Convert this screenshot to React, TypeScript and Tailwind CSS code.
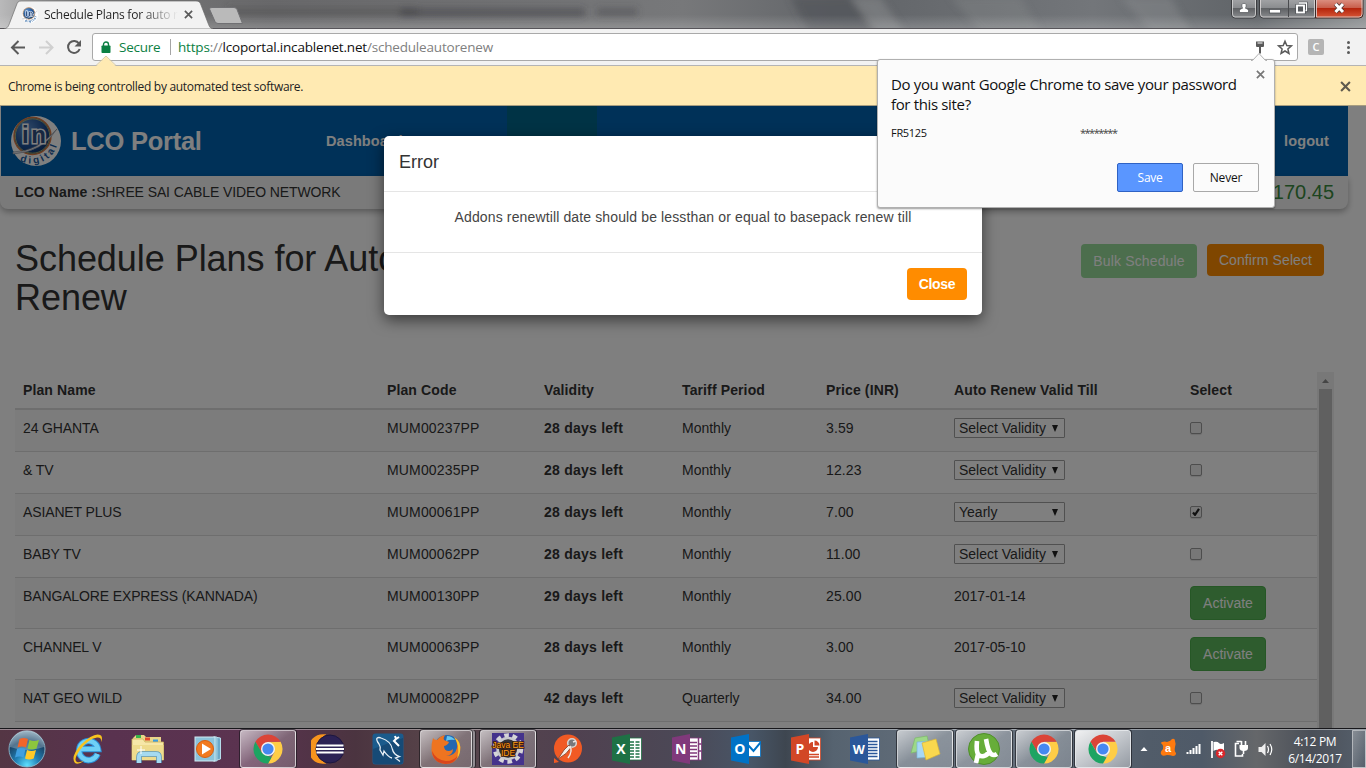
import type { ReactNode } from "react";

const UI = "font-['Open_Sans','Noto_Sans',sans-serif]";

type Plan = {
  name: string;
  code: string;
  left: string;
  period: string;
  price: string;
  choice?: string;
  date?: string;
  checked?: boolean;
};

const plans: Plan[] = [
  { name: "24 GHANTA", code: "MUM00237PP", left: "28 days left", period: "Monthly", price: "3.59", choice: "Select Validity" },
  { name: "& TV", code: "MUM00235PP", left: "28 days left", period: "Monthly", price: "12.23", choice: "Select Validity" },
  { name: "ASIANET PLUS", code: "MUM00061PP", left: "28 days left", period: "Monthly", price: "7.00", choice: "Yearly", checked: true },
  { name: "BABY TV", code: "MUM00062PP", left: "28 days left", period: "Monthly", price: "11.00", choice: "Select Validity" },
  { name: "BANGALORE EXPRESS (KANNADA)", code: "MUM00130PP", left: "29 days left", period: "Monthly", price: "25.00", date: "2017-01-14" },
  { name: "CHANNEL V", code: "MUM00063PP", left: "28 days left", period: "Monthly", price: "3.00", date: "2017-05-10" },
  { name: "NAT GEO WILD", code: "MUM00082PP", left: "42 days left", period: "Quarterly", price: "34.00", choice: "Select Validity" },
];

const COLS = "grid grid-cols-[364px_157px_138px_144px_128px_236px_135px]";

function Logo({ className }: { className: string }) {
  return (
    <svg viewBox="0 0 50 50" className={`${className} overflow-visible`}>
      <defs>
        <radialGradient id="orbBlue" cx="0.35" cy="0.3" r="0.8">
          <stop offset="0" stopColor="#5b8fce" />
          <stop offset="0.6" stopColor="#1d4f96" />
          <stop offset="1" stopColor="#0d3266" />
        </radialGradient>
        <path id="ring" d="M9 45 C22 51 45 48 48.500 20" />
      </defs>
      <circle cx="25" cy="25" r="25" fill="#fff" />
      <circle cx="21.500" cy="20" r="18.500" fill="url(#orbBlue)" stroke="#dd7a42" strokeWidth="1.400" />
      <circle cx="21.500" cy="20" r="17.200" fill="none" stroke="#c9c86a" strokeWidth="0.800" />
      <path d="M2 36 Q26 36 46 13 Q32 36 2 38Z" fill="#e8e8ee" stroke="#7b8696" strokeWidth="0.600" />
      <text x="11" y="27" fontSize="24" fontWeight="700" fontFamily="Liberation Sans" fill="#2f4f80" stroke="#fff" strokeWidth="3" paintOrder="stroke" textLength="24">in</text>
      <text fontSize="10" fontWeight="700" fontFamily="Liberation Sans" fill="#1b5a9e" letterSpacing="2.600">
        <textPath href="#ring">digital</textPath>
      </text>
    </svg>
  );
}

function Cross({ className }: { className: string }) {
  return (
    <svg viewBox="0 0 10 10" className={className} fill="none" stroke="currentColor">
      <path d="M1 1l8 8M9 1l-8 8" strokeWidth="1.900" />
    </svg>
  );
}

function TitleBar() {
  return (
    <div className="relative h-[29px] w-full shrink-0 overflow-hidden bg-[#6e6f72]">
      <svg className="absolute inset-0" width="1366" height="29" viewBox="0 0 1366 29">
        <defs>
          <linearGradient id="glass" x1="0" x2="1" y1="0" y2="0">
            <stop offset="0" stopColor="#b9b9ba" />
            <stop offset="0.06" stopColor="#777" />
            <stop offset="0.2" stopColor="#6a6a6c" />
            <stop offset="0.5" stopColor="#77787a" />
            <stop offset="0.62" stopColor="#616468" />
            <stop offset="0.8" stopColor="#73767a" />
            <stop offset="0.92" stopColor="#606468" />
            <stop offset="1" stopColor="#8d9092" />
          </linearGradient>
          <linearGradient id="glow" x1="0" x2="0" y1="0" y2="1">
            <stop offset="0.500" stopColor="#fff" stopOpacity="0" />
            <stop offset="1" stopColor="#fff" stopOpacity="0.2" />
          </linearGradient>
          <filter id="soft" x="-20%" y="-80%" width="140%" height="260%">
            <feGaussianBlur stdDeviation="3.500" />
          </filter>
          <linearGradient id="closeRed" x1="0" x2="0" y1="0" y2="1">
            <stop offset="0" stopColor="#dd9384" />
            <stop offset="0.45" stopColor="#c9604d" />
            <stop offset="0.5" stopColor="#b5250c" />
            <stop offset="1" stopColor="#d8593a" />
          </linearGradient>
          <linearGradient id="ctl" x1="0" x2="0" y1="0" y2="1">
            <stop offset="0" stopColor="#a3a4a6" />
            <stop offset="0.45" stopColor="#8b8d90" />
            <stop offset="0.5" stopColor="#606265" />
            <stop offset="1" stopColor="#8a8c8f" />
          </linearGradient>
        </defs>
        <rect width="1366" height="29" fill="url(#glass)" />
        <g filter="url(#soft)">
          <rect x="228" y="7" width="190" height="9" fill="#48484a" opacity="0.400" />
          <rect x="400" y="8" width="185" height="9" fill="#3c3c3e" opacity="0.450" />
          <rect x="597" y="8" width="40" height="8" fill="#48484a" opacity="0.450" />
          <path d="M790 -3h60l30 36h-70z" fill="#525659" opacity="0.700" />
          <path d="M850 -3h30l25 36h-30z" fill="#8c8e90" opacity="0.500" />
          <path d="M950 -3h70l22 36h-60z" fill="#8c8e90" opacity="0.300" />
          <path d="M1120 -3h50l22 36h-40z" fill="#8c8e90" opacity="0.400" />
        </g>
        <rect width="1366" height="29" fill="url(#glow)" />
        <path d="M0 28.500H1366" stroke="#57555a" />
        <path d="M4 29 C8 28 8.500 26 10 22 L16.500 5 C17.500 2 18.500 1 21 1 H196 C199 1 200 2 201 5 L208 23 C209.500 27 210 28 213 29Z" fill="#f2f2f2" stroke="#6b6b6b" strokeWidth="0.700" />
        <path d="M212 7.500 H234 Q236 7.500 237 9.500 L242.500 23.500 H218 Q216 23.500 215 21.500 L209.500 9 Q209 7.500 212 7.500Z" fill="#bababa" stroke="#707073" />
        <path d="M1231.500 -1V14Q1231.500 18 1235 18H1253Q1256.500 18 1256.500 14V-1Z" fill="url(#ctl)" stroke="#3c3d40" />
        <path d="M1232.500 -1V14Q1232.500 17 1235 17H1253Q1255.500 17 1255.500 14V-1" fill="none" stroke="#d8d8d8" strokeWidth="0.800" />
        <path d="M1259.500 -1V14Q1259.500 18 1263 18H1315.500V-1Z" fill="url(#ctl)" stroke="#3c3d40" />
        <path d="M1315.500 -1V18H1359Q1363 18 1363 14V-1Z" fill="url(#closeRed)" stroke="#3c2a28" />
        <path d="M1260.500 -1V14Q1260.500 17 1263 17H1314.500V-1M1316.500 -1V17H1359Q1362 17 1362 14V-1" fill="none" stroke="#e0dcdc" strokeWidth="0.800" />
        <path d="M1288.500 0V17" stroke="#4a4b4e" />
        <path d="M1239.500 12.500V10.500Q1240 8.500 1242.500 8.300Q1240.500 3.500 1244 3.300Q1247.500 3.500 1245.500 8.300Q1248 8.500 1248.500 10.500V12.500Z" fill="#fff" stroke="#515459" strokeWidth="0.700" />
        <rect x="1269.500" y="9.500" width="11" height="3.500" fill="#fff" stroke="#515459" strokeWidth="0.800" />
        <path d="M1299 3h7.500v7.500h-2" fill="none" stroke="#45484d" strokeWidth="2.600" />
        <path d="M1299 3h7.500v7.500h-2" fill="none" stroke="#fff" strokeWidth="1.300" />
        <rect x="1297" y="5.500" width="7" height="7" fill="#55585c" stroke="#45484d" strokeWidth="3" />
        <rect x="1297" y="5.500" width="7" height="7" fill="#55585c" stroke="#fff" strokeWidth="1.900" />
        <path d="M1335.500 4l7.500 8M1343 4l-7.500 8" stroke="#4c3230" strokeWidth="4.500" />
        <path d="M1335.500 4l7.500 8M1343 4l-7.500 8" stroke="#fff" strokeWidth="3" />
      </svg>
      <div className="relative flex h-[29px] w-[212px] items-center pl-[22px]">
        <Logo className="h-4 w-4" />
        <div className={`${UI} ml-[6px] w-[134px] overflow-hidden bg-linear-to-r from-[#222] from-[72%] to-transparent bg-clip-text text-[12px] leading-4 tracking-[-0.25px] whitespace-nowrap text-transparent`}>
          Schedule Plans for auto r
        </div>
        <Cross className="ml-[6px] h-[9px] w-[9px] text-[#5a5a5a]" />
      </div>
    </div>
  );
}

function Toolbar() {
  return (
    <div className="flex h-[37px] w-full shrink-0 items-start border-b border-[#b4b4b4] bg-[#f2f2f2] pt-1">
      <svg width="92" height="28" viewBox="0 0 92 28" fill="none" className="shrink-0" strokeWidth="2">
        <path d="M25 14.500H12.500M18.500 8l-6.500 6.500 6.500 6.500" stroke="#5a5a5a" />
        <path d="M39 14.500H52M46 8l6.500 6.500-6.500 6.500" stroke="#d0d0d0" />
        <path d="M79 10.500A6 6 0 1 0 79.700 16" stroke="#5a5a5a" />
        <path d="M81 7v6.500h-6.500z" fill="#5a5a5a" />
      </svg>
      <div className={`${UI} flex h-7 w-[1206px] shrink-0 items-center rounded-[3px] border border-[#a9a9a9] bg-white pl-2 text-[14px] tracking-[-0.25px]`}>
        <svg width="10" height="13" viewBox="0 0 10 13" className="shrink-0">
          <path d="M2.500 5V3.500a2.500 2.500 0 0 1 5 0V5" fill="none" stroke="#0b8043" strokeWidth="1.400" />
          <rect x="0.500" y="4.500" width="9" height="7.500" rx="0.800" fill="#0b8043" />
        </svg>
        <span className="ml-[8px] w-[51px] shrink-0 text-[13.5px] text-[#0b8043]">Secure</span>
        <span className="mr-[7px] h-4 w-px shrink-0 bg-[#a5a5a5]" />
        <span className="w-[1066px] shrink-0 text-[13.5px] tracking-[-0.19px] text-[#808080]">
          <span className="text-[#0b8043]">https</span>://<span className="text-[#111]">lcoportal.incablenet.net</span>/scheduleautorenew
        </span>
        <svg width="50" height="26" viewBox="0 0 50 26" className="shrink-0">
          <path d="M12 7.500h8v4.500q0 1-1 1h-2v6.500h-2v-6.500h-2q-1 0-1-1z" fill="#5a5a5a" />
          <path d="M13.500 9h5" stroke="#fff" strokeWidth="1" />
          <path d="M41 7.200l1.800 4.300 4.600.4-3.500 3 1.050 4.500-3.950-2.400-3.950 2.400 1.050-4.500-3.500-3 4.600-.4z" fill="none" stroke="#5a5a5a" strokeWidth="1.500" />
        </svg>
      </div>
      <div className="mt-[6px] ml-[10px] flex h-4 w-4 items-center justify-center rounded-[2px] bg-[#b5b5b5] font-['Open_Sans',sans-serif] text-[11px] font-semibold text-white">C</div>
      <div className="mt-[8px] ml-[23px] flex w-[3px] flex-col gap-[2px]">
        <i className="h-[3px] rounded-full bg-[#5a5a5a]" />
        <i className="h-[3px] rounded-full bg-[#5a5a5a]" />
        <i className="h-[3px] rounded-full bg-[#5a5a5a]" />
      </div>
    </div>
  );
}

function InfoBar() {
  return (
    <div className={`${UI} relative flex h-[40px] w-full shrink-0 items-center justify-between border-b border-[#a79d80] bg-[#ffeab2] pt-[2px] pr-[15px] pl-2 text-[12px] text-[#222]`}>
      <svg className="absolute -top-[10px] left-[96px]" width="20" height="11" viewBox="0 0 20 11">
        <path d="M0 10.500L10 0.500L20 10.500V11H0Z" fill="#ffeab2" />
        <path d="M0 9.500L10 0L20 9.500" fill="none" stroke="#d9cca5" />
      </svg>
      <span className="tracking-[-0.3px]">Chrome is being controlled by automated test software.</span>
      <Cross className="h-[11px] w-[11px] text-[#5f5a4e]" />
    </div>
  );
}

function Row({ plan, index }: { plan: Plan; index: number }) {
  const cell = "px-2 pt-2 leading-5 whitespace-nowrap";
  return (
    <div className={`${COLS} border-b border-[#ddd] ${plan.date ? "h-[51px]" : "h-[42px]"} ${index % 2 === 0 ? "bg-[#f9f9f9]" : "bg-white"}`}>
      <div className={`${cell} tracking-[-0.13px]`}>{plan.name}</div>
      <div className={`${cell} tracking-[0.15px]`}>{plan.code}</div>
      <div className={`${cell} font-bold tracking-[0.24px]`}>{plan.left}</div>
      <div className={cell}>{plan.period}</div>
      <div className={`${cell} tracking-[0.1px]`}>{plan.price}</div>
      <div className={cell}>
        {plan.date ? (
          plan.date
        ) : (
          <div className="flex h-5 w-[111px] items-center justify-between rounded-[1px] border border-[#a0a0a0] bg-white pr-[5px] pl-1">
            <span>{plan.choice}</span>
            <svg width="8" height="7" viewBox="0 0 8 7"><path d="M1 0h6L4 7z" fill="#222" /></svg>
          </div>
        )}
      </div>
      <div className={cell}>
        {plan.date ? (
          <div className="flex h-[34px] w-[76px] items-center justify-center rounded border border-[#4cae4c] bg-[#5cb85c] text-white">Activate</div>
        ) : (
          <div className="mt-1 flex h-3 w-3 items-center justify-center rounded-[2px] border border-[#9a9a9a] bg-[#eee] shadow-[0_1px_1px_rgba(0,0,0,0.12)]">
            {plan.checked && (
              <svg width="8" height="8" viewBox="0 0 8 8"><path d="M1 4.500l2 2.300L7 0.800" fill="none" stroke="#222" strokeWidth="2.200" /></svg>
            )}
          </div>
        )}
      </div>
    </div>
  );
}

function Portal() {
  return (
    <div className="flex h-full w-[1348px] flex-col">
      <div className="ml-px flex h-[70px] shrink-0 items-center bg-[#0063b1] font-bold text-white">
        <Logo className="ml-[10px] h-[50px] w-[50px] shrink-0" />
        <div className="ml-[10px] w-[255px] text-[25.5px] tracking-[-0.25px]">LCO Portal</div>
        <div className="w-[181px] pt-px text-[14.5px] tracking-[0.1px]">Dashboard</div>
        <div className="h-full w-[90px] bg-[#00668a]" />
        <div className="mr-[19px] ml-auto pt-px text-[14.5px] tracking-[0.1px]">logout</div>
      </div>
      <div className="flex h-[33px] shrink-0 items-center justify-between rounded-b-[8px] bg-[#f5f5f5] pr-[14px] pl-[15px] shadow-[0_3px_6px_rgba(0,0,0,0.3)]">
        <div className="text-[14px] tracking-[-0.1px]"><b className="tracking-[0.1px]">LCO Name :</b>SHREE SAI CABLE VIDEO NETWORK</div>
        <div className="pb-px text-[20px] text-[#3a8a40]">170.45</div>
      </div>
      <div className="flex h-[163px] shrink-0 justify-between pt-[30px] pr-6 pl-[15px]">
        <h1 className="w-[400px] text-[36px] leading-[39px] tracking-[-0.05px]">Schedule Plans for Auto Renew</h1>
        <div className="flex items-start gap-[10px] pt-[5px] text-[14px] text-white">
          <div className="flex h-[34px] w-[116px] items-center justify-center rounded bg-[#98dc9a] tracking-[0.15px]">Bulk Schedule</div>
          <div className="flex h-8 w-[117px] items-center justify-center rounded bg-[#ff8c00] tracking-[0.1px]">Confirm Select</div>
        </div>
      </div>
      <div className="flex min-h-0 flex-1 overflow-hidden pl-[15px] text-[14px]">
        <div className="w-[1302px]">
          <div className={`${COLS} h-[38px] border-b-2 border-[#ddd] font-bold tracking-[0.12px]`}>
            {["Plan Name", "Plan Code", "Validity", "Tariff Period", "Price (INR)", "Auto Renew Valid Till", "Select"].map((h) => (
              <div key={h} className="px-2 pt-2 leading-5">{h}</div>
            ))}
          </div>
          {plans.map((p, i) => <Row key={p.code} plan={p} index={i} />)}
          <div className="h-10 bg-white" />
        </div>
        <div className="flex w-[17px] flex-col items-center bg-[#f1f1f1]">
          <div className="flex h-[17px] items-center pt-px"><svg width="7" height="4" viewBox="0 0 7 4"><path d="M0 4h7L3.500 0z" fill="#8a8a8a" /></svg></div>
          <div className="w-[13px] flex-1 bg-[#c1c1c1]" />
        </div>
      </div>
    </div>
  );
}

function ErrorDialog() {
  return (
    <div className="absolute top-[30px] left-[384px] flex h-[179px] w-[598px] flex-col rounded-[5px] bg-white shadow-[0_5px_15px_rgba(0,0,0,0.55)]">
      <div className="flex h-14 items-center border-b border-[#e5e5e5] px-[15px] pb-[2px] text-[18px]">Error</div>
      <div className="flex h-[61px] justify-center border-b border-[#e5e5e5] pt-[15px] text-[14px] leading-5 tracking-[0.13px] text-[#444]">
        Addons renewtill date should be lessthan or equal to basepack renew till
      </div>
      <div className="flex flex-1 justify-end pt-[15px] pr-[15px]">
        <div className="flex h-8 w-[60px] items-center justify-center rounded bg-[#ff8c00] text-[14px] font-bold tracking-[-0.3px] text-white">Close</div>
      </div>
    </div>
  );
}

function PasswordBubble() {
  return (
    <div className={`${UI} absolute top-[59px] left-[877px] h-[149px] w-[398px] rounded-[3px] border border-[#b0b0b0] bg-[#fbfbfb] pt-[14px] pr-[15px] pl-[13px] text-[#111] shadow-[0_1px_2px_rgba(0,0,0,0.4)]`}>
      <svg className="absolute -top-[8px] left-[373px]" width="16" height="9" viewBox="0 0 16 9">
        <path d="M0 8.500h1.500L8 1.500l6.500 7H16" fill="#fbfbfb" stroke="#b0b0b0" />
        <path d="M2 9h12" stroke="#fbfbfb" />
      </svg>
      <Cross className="absolute top-[10px] right-[9px] h-[9px] w-[9px] text-[#777]" />
      <div className="text-[15px] leading-5 tracking-[-0.35px]">Do you want Google Chrome to save your password<br />for this site?</div>
      <div className="flex pt-[11px] text-[11px] leading-4">
        <span className="w-[189px] tracking-[-0.3px]">FR5125</span>
        <span className="tracking-[-1.5px] text-[#444]">********</span>
      </div>
      <div className="flex justify-end gap-[10px] pt-[22px] text-[12px]">
        <div className="flex h-[29px] w-[66px] items-center justify-center rounded-[2px] border border-[#2f62c4] bg-[#5a96ff] tracking-[-0.3px] text-white">Save</div>
        <div className="flex h-[29px] w-[66px] items-center justify-center rounded-[2px] border border-[#a8a8a8] bg-[#fbfbfb] tracking-[-0.2px]">Never</div>
      </div>
    </div>
  );
}

function ChromeIcon() {
  return (
    <svg width="30" height="30" viewBox="0 0 30 30">
      <path d="M27.600 7.700A14.600 14.600 0 0 1 15 29.600L21.500 18 15 8.300Z" fill="#ffcd46" />
      <path d="M2.400 7.700L8.700 18.600L15 15L15 7.700L27.600 7.700A14.600 14.600 0 0 0 2.400 7.700Z" fill="#db4437" />
      <path d="M2.400 7.700L9 19l6 3 3.500 1.500L15 29.600A14.600 14.600 0 0 1 2.400 7.700Z" fill="#1da462" />
      <circle cx="15" cy="15" r="7" fill="#f4f4f4" />
      <circle cx="15" cy="15" r="5.600" fill="#4688f1" />
    </svg>
  );
}

function OfficeIcon({ letter, color, kind }: { letter: string; color: string; kind: string }) {
  return (
    <svg width="30" height="30" viewBox="0 0 30 30">
      {kind !== "mail" && <rect x="15" y="4" width="14.500" height="22" fill="#fff" stroke={color} strokeWidth="0.800" />}
      {kind === "grid" && <path d="M18 8h4M23.500 8h4M18 11h4M23.500 11h4M18 14h4M23.500 14h4M18 17h4M23.500 17h4M18 20h4M23.500 20h4M18 23h4M23.500 23h4" stroke={color} strokeWidth="1.700" />}
      {kind === "lines" && <path d="M18 7.500h9.500M18 10.500h9.500M18 13.500h9.500M18 16.500h9.500M18 19.500h9.500M18 22.500h9.500" stroke={color} strokeWidth="1.500" />}
      {kind === "note" && <path d="M18 8.500h7M18 12h7M18 15.500h7M18 19h7M18 22.500h7M26.500 4v22M26.500 10h3M26.500 17h3" stroke={color} strokeWidth="1.500" />}
      {kind === "mail" && (
        <>
          <rect x="15" y="7.500" width="14.500" height="15" fill="#fff" stroke={color} strokeWidth="0.800" />
          <path d="M17 11l5.500 6L30 8" fill="none" stroke={color} strokeWidth="2" />
        </>
      )}
      {kind === "pie" && (
        <>
          <path d="M22 8v5h5a5 5 0 1 1-5-5z" fill={color} />
          <path d="M23.500 6.500a5 5 0 0 1 5 5h-5z" fill={color} />
          <path d="M18 20.500h10M18 23h10" stroke={color} strokeWidth="1.300" />
        </>
      )}
      <path d="M0 3.500L18 0v30L0 26.500z" fill={color} />
      <text x="8.800" y="20" textAnchor="middle" fontSize={letter === "W" ? 12.5 : 14} fontWeight="700" fontFamily="Open Sans" fill="#fff">{letter}</text>
    </svg>
  );
}

function StartOrb() {
  return (
    <svg width="40" height="38" viewBox="0 0 40 38" className="ml-[7px] shrink-0">
      <defs>
        <radialGradient id="start" cx="0.5" cy="0.95" r="0.95">
          <stop offset="0" stopColor="#5fe0ff" />
          <stop offset="0.35" stopColor="#2180b5" />
          <stop offset="0.7" stopColor="#1a4568" />
          <stop offset="1" stopColor="#7f9fb3" />
        </radialGradient>
      </defs>
      <circle cx="20" cy="19" r="18" fill="url(#start)" stroke="#8fb9cc" strokeWidth="0.900" />
      <path d="M3 17A17 17 0 0 1 37 17Q20 23 3 17Z" fill="#fff" opacity="0.250" />
      <path d="M12.500 9q4-2 8.500 0l-2 8.500q-4-2-8.500 0z" fill="#f1652a" />
      <path d="M22.500 10q4.500 2 9.500 0l-2.500 8.500q-4.500 2-9 0z" fill="#8cc63e" />
      <path d="M10 19q4-2 8.500 0l-2 8.500q-4-2-8.500 0z" fill="#3f9fe0" />
      <path d="M20 20q4.500 2 9 0l-2.300 8.500q-4.500 2-8.700 0z" fill="#ffc928" />
    </svg>
  );
}

const ieIcon = (
  <svg width="34" height="34" viewBox="0 0 34 34">
    <path d="M26.500 22A9.500 9.500 0 1 1 27 17H10" fill="none" stroke="#2b8fd6" strokeWidth="6.500" />
    <path d="M26.500 22A9.500 9.500 0 1 1 27 17H10" fill="none" stroke="#6fd0f6" strokeWidth="4.500" />
    <path d="M4 31Q-1 25 10 12.500Q24 -1 30 3.500Q32 5.500 30 10.500Q31 5 26 5.500Q17 7 9 18Q2 28 6 30Q9 31 13 28.500Q7 33.500 4 31Z" fill="#f7c31f" />
  </svg>
);

const folderIcon = (
  <svg width="34" height="32" viewBox="0 0 34 32">
    <path d="M2 5l3-3h8l2 2h15v5H2z" fill="#e9d489" />
    <rect x="5" y="2" width="5" height="3" fill="#36b54a" /><rect x="14" y="4.500" width="5" height="3" fill="#e2492c" /><rect x="22" y="6.500" width="5" height="3" fill="#3a9de0" />
    <path d="M1 6h11l2 3h18.500v18H1z" fill="#f6e7a8" stroke="#cdb25c" strokeWidth="0.800" />
    <path d="M1 12h31.500v15H1z" fill="#eedb8d" />
    <path d="M8 30v-6q0-3 3-3h14q3 0 3 3v6" fill="none" stroke="#5797bd" strokeWidth="5.500" />
    <path d="M8 30v-6q0-3 3-3h14q3 0 3 3v6" fill="none" stroke="#a5daf0" strokeWidth="4" />
    <path d="M10 13v8M6 17h8" stroke="#fff" strokeWidth="1" />
  </svg>
);

const mediaIcon = (
  <svg width="28" height="26" viewBox="0 0 28 26">
    <path d="M20 1l6.500 1v21L20 25z" fill="#6ca9c9" stroke="#b6dcea" />
    <path d="M19 1h4v24h-4z" fill="#7db8d3" stroke="#bfe2ee" strokeWidth="0.700" />
    <rect x="1" y="1" width="20" height="24" fill="#8cc3da" stroke="#d2eaf2" />
    <circle cx="11" cy="13" r="8.500" fill="#f27a1f" stroke="#d85f10" />
    <path d="M8 7.500v11l9-5.500z" fill="#fff" />
  </svg>
);

const eclipseIcon = (
  <svg width="34" height="30" viewBox="0 0 34 30">
    <path d="M12 1.500A13.500 13.500 0 0 0 12 28.500A18 18 0 0 1 12 1.500Z" fill="#f7941e" stroke="#f7941e" strokeWidth="2.500" />
    <circle cx="19" cy="15" r="14" fill="#2c2255" stroke="#1d1740" />
    <path d="M5.500 11.500h27M5 15h28M5.500 18.500h27" stroke="#fff" strokeWidth="2" />
  </svg>
);

const mysqlIcon = (
  <svg width="32" height="32" viewBox="0 0 32 32">
    <rect x="0.500" y="0.500" width="31" height="31" rx="3" fill="#1b5b8c" />
    <path d="M1 16L31 5v23q0 3-3 3H4q-3 0-3-3z" fill="#164a76" />
    <path d="M5 5q2-1 4 0q10 3 11.500 11.500q1 5 7 7l-4 1.500 4.500 3.500M5 5q-1 2 2 6q2 3 1 6l3 5 1-4q4 6 8 7" fill="none" stroke="#e8eff5" strokeWidth="1.300" />
    <path d="M23 3l1 3-2 2 5 5M24 6l3-2" stroke="#fff" strokeWidth="2" fill="none" />
  </svg>
);

const firefoxIcon = (
  <svg width="32" height="32" viewBox="0 0 32 32">
    <circle cx="17" cy="15" r="13" fill="#2467b0" />
    <path d="M17 3a11 11 0 0 1 8 4q-5-1-9 1z" fill="#63c6f1" />
    <path d="M3 5q1 2 4 2q3-4 8-5q-2 3-1 5l5 2q-1 3-5 4q0 5 5 5q2 0 4-2q0 6-7 7q9 0 11-8q1-6-3-11q8 5 6 15Q27 31 15.500 31Q3 30 1.500 18Q1 11 3 5Z" fill="#ee7420" />
    <path d="M24 4q8 5 6 15q-1 4-3 6q2-6 1-12q-1-5-4-9z" fill="#fbc52b" />
    <path d="M2 18q4 9 14 10q8 0 12-6-3 9-12.500 9Q3 30 2 18z" fill="#d9461c" />
  </svg>
);

const javaIcon = (
  <svg width="36" height="32" viewBox="0 0 36 32" className="overflow-visible">
    <rect x="2" y="0" width="32" height="32" fill="#45338c" />
    <circle cx="18" cy="15.500" r="12.800" fill="none" stroke="#d5d5d8" strokeWidth="5" strokeDasharray="4.500 3.540" />
    <circle cx="18" cy="15.500" r="10.500" fill="#33333a" stroke="#c9c9ce" strokeWidth="2.500" />
    <g fontFamily="Liberation Sans" fontSize="8.500" textAnchor="middle" fill="#ff9e1b" stroke="#3a1a08" strokeWidth="1.600" paintOrder="stroke">
      <text x="18" y="14.500">Java EE</text>
      <text x="18" y="22.800">IDE</text>
    </g>
  </svg>
);

const postmanIcon = (
  <svg width="30" height="30" viewBox="0 0 30 30">
    <path d="M1 29v-5l5 4z" fill="#f15a24" />
    <circle cx="15" cy="14.500" r="14" fill="#f15a24" />
    <circle cx="19" cy="9" r="4.300" fill="#77787b" stroke="#d9d4d0" strokeWidth="1.600" />
    <path d="M16 11l-5 5-6 9 8-5.500 5-6z" fill="#f4efe9" stroke="#8d4930" strokeWidth="0.900" />
    <path d="M17 12q3 5-2 12M20 8l3-1" stroke="#ede7e3" strokeWidth="1.500" fill="none" />
  </svg>
);

const notesIcon = (
  <svg width="32" height="28" viewBox="0 0 32 28">
    <path d="M6 3l12-2 3 13-19 4z" fill="#9dd888" stroke="#7dba68" strokeWidth="0.700" />
    <path d="M8 7l14-1v16l-14 1z" fill="#a6d7f6" stroke="#7ab4d7" strokeWidth="0.700" />
    <path d="M13 8l14-4 4 15-14 6z" fill="#fad84e" stroke="#d8b437" strokeWidth="0.700" />
  </svg>
);

const torrentIcon = (
  <svg width="34" height="34" viewBox="0 0 34 34">
    <circle cx="17" cy="17" r="15.500" fill="#67ad3a" stroke="#4f8f2a" />
    <path d="M10 9q-1 10 1 13q2 3 6 2q4-1 4-4M19 7q2 12 5 15q3 2 6 0M11 22l-2 9" stroke="#fff" strokeWidth="4.600" fill="none" />
  </svg>
);

type Task = { id: string; icon: ReactNode; state?: "open" | "stack" | "active"; wide?: boolean };

const tasks: Task[] = [
  { id: "ie", icon: ieIcon, wide: true },
  { id: "explorer", icon: folderIcon, wide: true },
  { id: "media", icon: mediaIcon, wide: true },
  { id: "chrome", icon: <ChromeIcon />, state: "open", wide: true },
  { id: "eclipse", icon: eclipseIcon, wide: true },
  { id: "mysql", icon: mysqlIcon, wide: true },
  { id: "firefox", icon: firefoxIcon, state: "stack", wide: true },
  { id: "java", icon: javaIcon, state: "open", wide: true },
  { id: "postman", icon: postmanIcon },
  { id: "excel", icon: <OfficeIcon letter="X" color="#1e7145" kind="grid" /> },
  { id: "onenote", icon: <OfficeIcon letter="N" color="#80397b" kind="note" /> },
  { id: "outlook", icon: <OfficeIcon letter="O" color="#0072c6" kind="mail" /> },
  { id: "powerpoint", icon: <OfficeIcon letter="P" color="#d24726" kind="pie" /> },
  { id: "word", icon: <OfficeIcon letter="W" color="#2b579a" kind="lines" /> },
  { id: "notes", icon: notesIcon, state: "open" },
  { id: "torrent", icon: torrentIcon, state: "open" },
  { id: "chrome2", icon: <ChromeIcon />, state: "open" },
  { id: "chrome3", icon: <ChromeIcon />, state: "active" },
];

function taskClass(state?: string) {
  const frame = "flex h-[38px] items-center justify-center";
  if (state === "active") return `${frame} w-[56px] rounded-[3px] border border-[#e2e5e8] bg-linear-to-br from-[#f0f1f2] via-[#c3c7cc] to-[#959ba3] shadow-[0_0_0_1px_rgba(20,20,25,0.6)]`;
  if (state === "open") return `${frame} w-[56px] rounded-[3px] border border-white/60 bg-linear-to-br from-white/65 via-white/25 to-white/20 shadow-[0_0_0_1px_rgba(20,20,25,0.6)]`;
  if (state === "stack") return `${frame} mr-[4px] w-[52px] rounded-[3px] border border-white/60 bg-linear-to-br from-white/65 via-white/25 to-white/20 shadow-[0_0_0_1px_rgba(20,20,25,0.6),3px_0_0_0_rgba(190,185,190,0.7),4px_0_0_0_rgba(20,20,25,0.6)]`;
  return frame;
}

function Taskbar() {
  return (
    <div className="flex h-10 w-full shrink-0 items-center border-t border-[#17171b] bg-[linear-gradient(90deg,#543644_0%,#59324f_8%,#5b3350_18%,#4b3440_26%,#58454a_32%,#504150_42%,#4b4856_50%,#485667_55%,#3e4650_57.5%,#566370_61%,#69737f_72%,#515c69_84%,#4f5a68_88%,#65676a_92%,#4a4f58_96%,#56606c_100%)] shadow-[inset_0_1px_0_rgba(255,255,255,0.4)]">
      <StartOrb />
      <div className="ml-[11px] flex w-[1075px] shrink-0">
        {tasks.map((t) => (
          <div key={t.id} className={`flex shrink-0 items-center justify-center ${t.wide ? "w-[60px]" : "w-[59.5px]"}`}>
            <div className={taskClass(t.state)}>{t.icon}</div>
          </div>
        ))}
      </div>
      <svg width="142" height="38" viewBox="0 0 142 38" className="shrink-0">
        <path d="M7.500 21h7l-3.500-4z" fill="#fff" />
        <path d="M29 12q3-1 5 0q4-1 5-3q3-1 3 2q1 2 0 6q-1 4 1 6q0 3-3 3q-3-1-6-1q-5 2-6-1q-1-2 2-5q1-3-1-5q-2-1 0-2z" fill="#ff7a0e" />
        <text x="32" y="21.500" fontSize="11" fontWeight="700" fontFamily="Liberation Sans" fill="#fff">a</text>
        <path d="M54.500 24v-2M57.500 24v-4M60.500 24v-6M63.500 24v-8M66.500 24v-10" stroke="#fff" strokeWidth="2" />
        <path d="M79 11v17" stroke="#fff" strokeWidth="1.800" />
        <path d="M80.500 12q4-1 5.500 1t5 0v8q-3 1-5-.500t-5.500.500z" fill="#fff" />
        <circle cx="87.500" cy="23.500" r="4.700" fill="#d9272b" />
        <path d="M85.700 21.700l3.600 3.600M89.300 21.700l-3.600 3.600" stroke="#fff" strokeWidth="1.400" />
        <path d="M106 13.500h-3.500v12.500h7v-2M103.500 11.500h5" fill="none" stroke="#fff" strokeWidth="1.600" />
        <path d="M106.500 15h8.500v3q0 3-4.200 3t-4.300-3z" fill="#fff" />
        <path d="M108.500 11v4M112.500 11v4M110.500 20v4" stroke="#fff" strokeWidth="1.600" fill="none" />
        <path d="M125.500 17h3l4-4v13l-4-4h-3z" fill="#eee" />
        <path d="M134.500 16q2 3.500 0 7M137 14q3.500 5.500 0 11" stroke="#fff" strokeWidth="1.200" fill="none" />
      </svg>
      <div className={`${UI} flex h-full flex-1 flex-col items-center justify-center pt-[2px] pl-[3px] text-[12px] leading-[17px] tracking-[-0.35px] text-white`}>
        <span>4:12 PM</span>
        <span>6/14/2017</span>
      </div>
      <div className="h-[38px] w-[14px] border border-white/50 bg-linear-to-br from-white/30 to-transparent" />
    </div>
  );
}

export default function App() {
  return (
    <div className="relative flex h-[768px] w-[1366px] flex-col overflow-hidden bg-white font-['Liberation_Sans',Arial,sans-serif] text-[#333]">
      <TitleBar />
      <Toolbar />
      <InfoBar />
      <div className="relative min-h-0 flex-1 overflow-hidden">
        <Portal />
        <div className="absolute inset-0 bg-black/50" />
        <ErrorDialog />
      </div>
      <Taskbar />
      <PasswordBubble />
    </div>
  );
}
